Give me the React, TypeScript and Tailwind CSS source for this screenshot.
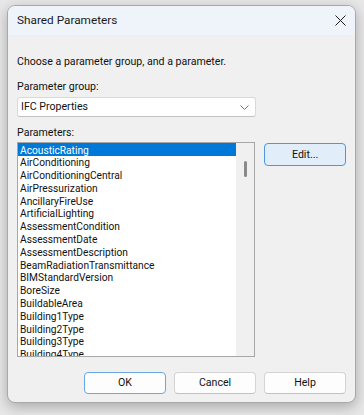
import React from "react";

const items = [
  "AcousticRating",
  "AirConditioning",
  "AirConditioningCentral",
  "AirPressurization",
  "AncillaryFireUse",
  "ArtificialLighting",
  "AssessmentCondition",
  "AssessmentDate",
  "AssessmentDescription",
  "BeamRadiationTransmittance",
  "BIMStandardVersion",
  "BoreSize",
  "BuildableArea",
  "Building1Type",
  "Building2Type",
  "Building3Type",
  "Building4Type",
];

export default function App() {
  return (
    <div
      className="w-[364px] h-[415px] bg-[#e8e8e8] pt-[5px] pl-[7px] overflow-hidden"
      style={{ fontFamily: 'Roboto, "Noto Sans", sans-serif' }}
    >
      <div className="w-[349px] h-[398px] rounded-[8px] border border-[#a9a9a9] overflow-hidden flex flex-col bg-[#f0f0f0] shadow-[0_4px_14px_rgba(0,0,0,0.28)]">
        {/* Title bar */}
        <div className="h-[29px] bg-[#eef4f9] flex items-center justify-between pl-[9px] pr-[9px] shrink-0">
          <span className="text-[11.8px] text-[#1b1b1b] leading-none">Shared Parameters</span>
          <svg width="11" height="11" viewBox="0 0 11 11">
            <path d="M0.5 0.5 L10.5 10.5 M10.5 0.5 L0.5 10.5" stroke="#1b1b1b" strokeWidth="1" fill="none" />
          </svg>
        </div>
        {/* Body */}
        <div className="flex-1 flex flex-col pl-[9px] pr-[9px] text-[#111]">
          <div className="mt-[19px] h-[16px] leading-[16px] text-[10.6px]">
            Choose a parameter group, and a parameter.
          </div>
          <div className="mt-[9px] h-[16px] leading-[16px] text-[10.6px]">Parameter group:</div>
          <div className="mt-[2px] w-[239px] h-[20px] bg-white border border-[#dadada] border-b-[#c2c2c2] rounded-[3px] flex items-center justify-between pl-[3px] pr-[6px]">
            <span className="text-[10.6px] leading-none">IFC Properties</span>
            <svg width="9" height="5" viewBox="0 0 9 5">
              <path d="M0.5 0.5 L4.5 4.5 L8.5 0.5" stroke="#7a7a7a" strokeWidth="1" fill="none" />
            </svg>
          </div>
          <div className="mt-[8px] h-[16px] leading-[16px] text-[10.6px]">Parameters:</div>
          <div className="mt-[1px] flex items-start">
            <div className="w-[239px] h-[215px] border border-[#a7a7a7] bg-white flex overflow-hidden">
              <div className="flex-1 flex flex-col overflow-hidden">
                {items.map((it, i) => (
                  <div
                    key={it}
                    className={
                      "h-[12.8px] shrink-0 pt-[1.5px] leading-[11.3px] text-[10.2px] pl-[2px] whitespace-nowrap " +
                      (i === 0 ? "bg-[#0078d7] text-white" : "text-[#111]")
                    }
                  >
                    {it}
                  </div>
                ))}
              </div>
              <div className="w-[18px] h-full bg-[#f0f0f0] flex justify-center pt-[18px] pl-[1px]">
                <div className="w-[3px] h-[16px] rounded-full bg-[#8a8a8a]" />
              </div>
            </div>
            <button className="ml-[9px] mt-[1px] w-[82px] h-[23px] rounded-[4px] border border-[#4a98e0] bg-[#e1edf9] text-[10.6px] text-[#111] flex items-center justify-center">
              Edit...
            </button>
          </div>
          <div className="mt-[15px] flex justify-end gap-[8px]">
            <button className="w-[82px] h-[22px] rounded-[4px] border border-[#6aa6e3] bg-[#fdfdfd] text-[10.6px] text-[#111] flex items-center justify-center">
              OK
            </button>
            <button className="w-[82px] h-[22px] rounded-[4px] border border-[#d4d4d4] border-b-[#c2c2c2] bg-[#fdfdfd] text-[10.6px] text-[#111] flex items-center justify-center">
              Cancel
            </button>
            <button className="w-[82px] h-[22px] rounded-[4px] border border-[#d4d4d4] border-b-[#c2c2c2] bg-[#fdfdfd] text-[10.6px] text-[#111] flex items-center justify-center">
              Help
            </button>
          </div>
        </div>
      </div>
    </div>
  );
}
